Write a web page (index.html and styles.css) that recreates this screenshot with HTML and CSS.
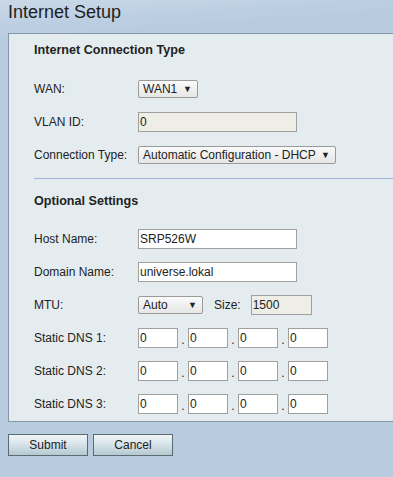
FILE: index.html
```html
<!DOCTYPE html>
<html lang="en">
<head>
    <meta charset="UTF-8">
    <meta name="viewport" content="width=device-width, initial-scale=1.0">
    <title>Internet Setup</title>
    <link rel="stylesheet" href="styles.css">
</head>
<body>
    <h1 class="page-title">Internet Setup</h1>

    <div class="panel">
        <h2 class="section-title">Internet Connection Type</h2>

        <div class="form-row">
            <label class="form-label">WAN:</label>
            <span class="select-box select-wan">WAN1<span class="arrow">▼</span></span>
        </div>
        <div class="form-row">
            <label class="form-label">VLAN ID:</label>
            <input class="text-input wide disabled" type="text" value="0" readonly>
        </div>
        <div class="form-row">
            <label class="form-label">Connection Type:</label>
            <span class="select-box select-conn">Automatic Configuration - DHCP<span class="arrow">▼</span></span>
        </div>

        <div class="separator"></div>

        <h2 class="section-title second">Optional Settings</h2>

        <div class="form-row">
            <label class="form-label">Host Name:</label>
            <input class="text-input wide" type="text" value="SRP526W">
        </div>
        <div class="form-row">
            <label class="form-label">Domain Name:</label>
            <input class="text-input wide" type="text" value="universe.lokal">
        </div>
        <div class="form-row">
            <label class="form-label">MTU:</label>
            <span class="select-box select-mtu">Auto<span class="arrow">▼</span></span>
            <span class="size-label">Size:</span>
            <input class="text-input size disabled" type="text" value="1500" readonly>
        </div>
        <div class="form-row">
            <label class="form-label">Static DNS 1:</label>
            <div class="ip-group">
                <input class="text-input octet" type="text" value="0"><span class="dot">.</span>
                <input class="text-input octet" type="text" value="0"><span class="dot">.</span>
                <input class="text-input octet" type="text" value="0"><span class="dot">.</span>
                <input class="text-input octet" type="text" value="0">
            </div>
        </div>
        <div class="form-row">
            <label class="form-label">Static DNS 2:</label>
            <div class="ip-group">
                <input class="text-input octet" type="text" value="0"><span class="dot">.</span>
                <input class="text-input octet" type="text" value="0"><span class="dot">.</span>
                <input class="text-input octet" type="text" value="0"><span class="dot">.</span>
                <input class="text-input octet" type="text" value="0">
            </div>
        </div>
        <div class="form-row">
            <label class="form-label">Static DNS 3:</label>
            <div class="ip-group">
                <input class="text-input octet" type="text" value="0"><span class="dot">.</span>
                <input class="text-input octet" type="text" value="0"><span class="dot">.</span>
                <input class="text-input octet" type="text" value="0"><span class="dot">.</span>
                <input class="text-input octet" type="text" value="0">
            </div>
        </div>
    </div>

    <div class="button-bar">
        <button class="btn" type="button">Submit</button>
        <button class="btn" type="button">Cancel</button>
    </div>
</body>
</html>
```
FILE: styles.css
```css
body {
    font-family: "Liberation Sans", Arial, sans-serif;
    font-size: 12px;
    color: #222;
    margin: 0;
    padding: 0 0 0 8px;
    min-height: 477px;
    box-sizing: border-box;
    background-color: #b8cce0;
    background-image: linear-gradient(176deg, #cad9e8 0, #bccfe2 26px, #b8cce0 40px);
}

.page-title {
    font-size: 18px;
    font-weight: normal;
    line-height: 24px;
    margin: 0;
    color: #1e1e1e;
}

/* the panel runs off the right edge in the original, so no right border */
.panel {
    margin-top: 9px;
    background-color: #e5ecf0;
    border: 1px solid #8597a6;
    border-right: none;
    padding: 8px 0 1px 25px;
}

.section-title {
    font-size: 12.6px;
    font-weight: bold;
    line-height: 16px;
    margin: 0 0 14px 0;
    color: #222;
}

.section-title.second {
    margin-bottom: 13px;
}

.form-row {
    display: flex;
    align-items: center;
    height: 33px;
}

.form-label {
    width: 104px;
    flex-shrink: 0;
}

.select-box {
    position: relative;
    display: inline-block;
    box-sizing: border-box;
    height: 18px;
    line-height: 16px;
    padding-left: 4px;
    border: 1px solid #9a9a9a;
    border-radius: 2px;
    background: linear-gradient(#fafafa, #e6e6e6);
    color: #222;
}

.select-box .arrow {
    position: absolute;
    right: 5px;
    top: 0;
    font-size: 9px;
}

.select-wan {
    width: 60px;
}

.select-conn {
    width: 198px;
}

.select-mtu {
    width: 65px;
}

.size-label {
    margin: 0 10px 0 11px;
}

.text-input {
    box-sizing: border-box;
    height: 20px;
    border: 1px solid #a0a0a0;
    background-color: #fff;
    font-family: "Liberation Sans", Arial, sans-serif;
    font-size: 12px;
    color: #222;
    padding: 0 1px;
    margin: 0;
    outline: none;
}

.text-input.disabled {
    background-color: #eeede6;
}

.text-input.wide {
    width: 159px;
}

.text-input.size {
    width: 61px;
}

.ip-group {
    display: flex;
    align-items: center;
}

.text-input.octet {
    width: 40px;
}

.dot {
    width: 10px;
    text-align: center;
    padding-top: 4px;
}

.separator {
    height: 1px;
    background-color: #a9b1df;
    margin: 7px 0 14px 0;
}

.button-bar {
    display: flex;
    gap: 5px;
    margin-top: 12px;
}

.btn {
    width: 80px;
    height: 22px;
    border: 1px solid #5c6a72;
    background: linear-gradient(#f2f6f8, #d8e4ea 45%, #b4c8d0);
    font-family: "Liberation Sans", Arial, sans-serif;
    font-size: 12px;
    color: #222;
    padding: 0;
}
```
